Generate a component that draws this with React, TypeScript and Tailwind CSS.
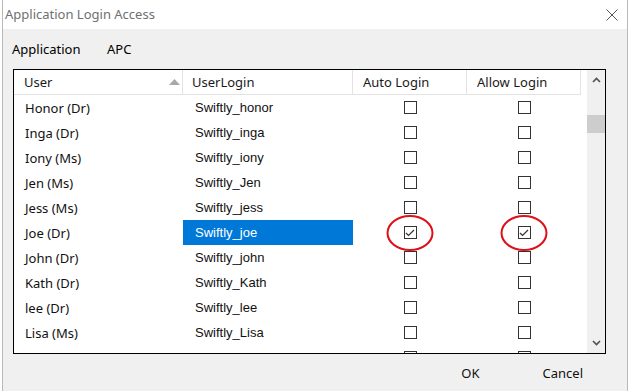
import React from "react";

type Row = { user: string; login: string; auto: boolean; allow: boolean; selected?: boolean };

const rows: Row[] = [
  { user: "Honor (Dr)", login: "Swiftly_honor", auto: false, allow: false },
  { user: "Inga (Dr)", login: "Swiftly_inga", auto: false, allow: false },
  { user: "Iony (Ms)", login: "Swiftly_iony", auto: false, allow: false },
  { user: "Jen (Ms)", login: "Swiftly_Jen", auto: false, allow: false },
  { user: "Jess (Ms)", login: "Swiftly_jess", auto: false, allow: false },
  { user: "Joe (Dr)", login: "Swiftly_joe", auto: true, allow: true, selected: true },
  { user: "John (Dr)", login: "Swiftly_john", auto: false, allow: false },
  { user: "Kath (Dr)", login: "Swiftly_Kath", auto: false, allow: false },
  { user: "lee (Dr)", login: "Swiftly_lee", auto: false, allow: false },
  { user: "Lisa (Ms)", login: "Swiftly_Lisa", auto: false, allow: false },
  { user: "Margaret Ann (Mrs)", login: "Swiftly_margaret", auto: false, allow: false },
];

function CheckBox({ checked, circled }: { checked: boolean; circled?: boolean }) {
  return (
    <span className="relative flex h-[13px] w-[13px] items-center justify-center border border-[#333333] bg-white">
      {checked && (
        <svg width="10" height="8" viewBox="0 0 10 8" fill="none">
          <polyline points="1,4 3.5,6.5 9,1" stroke="#333333" strokeWidth="1.2" />
        </svg>
      )}
      {/* red annotation ring */}
      {circled && (
        <span className="absolute left-1/2 top-1/2 h-[36px] w-[47px] -translate-x-1/2 -translate-y-1/2 rounded-[50%] border-2 border-[#e0101a]" />
      )}
    </span>
  );
}

export default function App() {
  return (
    <div className="flex h-[391px] w-[632px] overflow-hidden bg-white font-['Noto_Sans',sans-serif]">
      <div className="ml-[2px] flex h-full w-[626px] flex-col border-x border-[#b9b9b9] bg-[#f0f0f0]">
        {/* title bar */}
        <div className="flex h-[29px] items-center justify-between bg-white pl-[2px] pr-[9px] text-[13px] text-[#707070]">
          <span>Application Login Access</span>
          <svg width="12" height="12" viewBox="0 0 12 12">
            <path d="M0.5 0.5 L11.5 11.5 M11.5 0.5 L0.5 11.5" stroke="#555555" strokeWidth="1" />
          </svg>
        </div>

        {/* menu */}
        <div className="flex h-[40px] items-center pt-[1px] pl-[9px] text-[13px] text-black">
          <span className="w-[95px]">Application</span>
          <span>APC</span>
        </div>

        {/* list */}
        <div className="ml-[10px] flex h-[285px] w-[593px] border border-black bg-white">
          <div className="w-[573px] overflow-hidden">
            <div className="grid h-[25px] w-[567px] grid-cols-[169px_170px_114px_114px] border-b border-[#e3e3e3] text-[13px] text-[#1a1a1a]">
              <div className="flex items-center justify-between border-r border-[#e3e3e3] pl-[10px] pr-[2px]">
                <span className="pt-[1px]">User</span>
                <svg width="11" height="6" viewBox="0 0 11 6">
                  <polygon points="0,6 5.5,0 11,6" fill="#a8a8a8" />
                </svg>
              </div>
              <div className="flex items-center border-r border-[#e3e3e3] pl-[9px] pt-[1px]">UserLogin</div>
              <div className="flex items-center border-r border-[#e3e3e3] pl-[10px] pt-[1px]">Auto Login</div>
              <div className="flex items-center border-r border-[#e3e3e3] pl-[10px] pt-[1px]">Allow Login</div>
            </div>

            {rows.map((r) => (
              <div key={r.login} className="grid h-[25px] w-[567px] grid-cols-[169px_170px_114px_114px]">
                <div className="flex items-center pl-[11px] pt-[2px] text-[13px] text-[#111111]">{r.user}</div>
                <div
                  className={`flex items-center pl-[12px] pt-[1px] font-['Liberation_Sans',sans-serif] text-[13px] ${
                    r.selected ? "bg-[#0078d7] text-white" : "text-[#111111]"
                  }`}
                >
                  {r.login}
                </div>
                <div className="flex items-center justify-center">
                  <CheckBox checked={r.auto} circled={r.selected} />
                </div>
                <div className="flex items-center justify-center">
                  <CheckBox checked={r.allow} circled={r.selected} />
                </div>
              </div>
            ))}
          </div>

          {/* scrollbar */}
          <div className="flex w-[18px] flex-col bg-[#f0f0f0]">
            <div className="flex h-[20px] items-center justify-center">
              <svg width="9" height="6" viewBox="0 0 9 6">
                <polyline points="1,5 4.5,1.5 8,5" fill="none" stroke="#505050" strokeWidth="1.6" />
              </svg>
            </div>
            <div className="mt-[25px] h-[18px] bg-[#cdcdcd]" />
            <div className="flex-1" />
            <div className="flex h-[20px] items-center justify-center">
              <svg width="9" height="6" viewBox="0 0 9 6">
                <polyline points="1,1 4.5,4.5 8,1" fill="none" stroke="#505050" strokeWidth="1.6" />
              </svg>
            </div>
          </div>
        </div>

        {/* buttons */}
        <div className="flex flex-1 items-center justify-end pt-[3px] pr-[44px] text-[13px] text-[#111111]">
          <span>OK</span>
          <span className="ml-[63px]">Cancel</span>
        </div>
      </div>
    </div>
  );
}
